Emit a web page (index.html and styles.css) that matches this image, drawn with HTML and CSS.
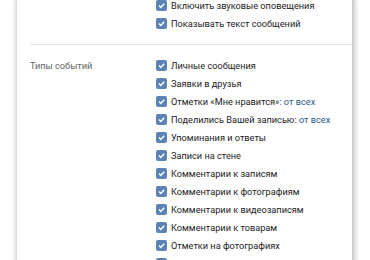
FILE: index.html
```html
<!DOCTYPE html>
<html lang="ru">
<head>
    <meta charset="UTF-8">
    <title>Настройки оповещений</title>
    <link rel="stylesheet" href="styles.css">
</head>
<body>
    <div class="page">
        <div class="card">
            <div class="section">
                <div class="section-label"></div>
                <div class="options">
                    <label class="option"><svg class="check" viewBox="0 0 11 11"><path d="M3 5.6l1.8 1.8 3.4-3.7"/></svg>Включить звуковые оповещения</label>
                    <label class="option"><svg class="check" viewBox="0 0 11 11"><path d="M3 5.6l1.8 1.8 3.4-3.7"/></svg>Показывать текст сообщений</label>
                </div>
            </div>

            <div class="divider"></div>

            <div class="section">
                <div class="section-label">Типы событий</div>
                <div class="options">
                    <label class="option"><svg class="check" viewBox="0 0 11 11"><path d="M3 5.6l1.8 1.8 3.4-3.7"/></svg>Личные сообщения</label>
                    <label class="option"><svg class="check" viewBox="0 0 11 11"><path d="M3 5.6l1.8 1.8 3.4-3.7"/></svg>Заявки в друзья</label>
                    <label class="option"><svg class="check" viewBox="0 0 11 11"><path d="M3 5.6l1.8 1.8 3.4-3.7"/></svg>Отметки «Мне нравится»: <a class="link">от всех</a></label>
                    <label class="option"><svg class="check" viewBox="0 0 11 11"><path d="M3 5.6l1.8 1.8 3.4-3.7"/></svg>Поделились Вашей записью: <a class="link">от всех</a></label>
                    <label class="option"><svg class="check" viewBox="0 0 11 11"><path d="M3 5.6l1.8 1.8 3.4-3.7"/></svg>Упоминания и ответы</label>
                    <label class="option"><svg class="check" viewBox="0 0 11 11"><path d="M3 5.6l1.8 1.8 3.4-3.7"/></svg>Записи на стене</label>
                    <label class="option"><svg class="check" viewBox="0 0 11 11"><path d="M3 5.6l1.8 1.8 3.4-3.7"/></svg>Комментарии к записям</label>
                    <label class="option"><svg class="check" viewBox="0 0 11 11"><path d="M3 5.6l1.8 1.8 3.4-3.7"/></svg>Комментарии к фотографиям</label>
                    <label class="option"><svg class="check" viewBox="0 0 11 11"><path d="M3 5.6l1.8 1.8 3.4-3.7"/></svg>Комментарии к видеозаписям</label>
                    <label class="option"><svg class="check" viewBox="0 0 11 11"><path d="M3 5.6l1.8 1.8 3.4-3.7"/></svg>Комментарии к товарам</label>
                    <label class="option"><svg class="check" viewBox="0 0 11 11"><path d="M3 5.6l1.8 1.8 3.4-3.7"/></svg>Отметки на фотографиях</label>
                    <label class="option"><svg class="check" viewBox="0 0 11 11"><path d="M3 5.6l1.8 1.8 3.4-3.7"/></svg>Подарки</label>
                </div>
            </div>
        </div>
    </div>
</body>
</html>
```

FILE: styles.css
```css
/* Global Styles */
* {
    box-sizing: border-box;
    margin: 0;
    padding: 0;
}

body {
    font-family: Roboto, 'Liberation Sans', Arial, sans-serif;
    font-size: 9.2px;
    color: #222;
    background: #fff;
    overflow: hidden;
}

.page {
    padding: 0 18px 0 17px;
}

/* Card */
.card {
    background: #fff;
    box-shadow: 1px 0 6px 1px rgba(0, 0, 0, 0.3);
    padding: 0 0 0 13px;
    margin-top: -3px;
}

.section {
    display: flex;
}

.section-label {
    width: 126px;
    flex-shrink: 0;
    color: #656565;
    line-height: 18px;
}

.options {
    display: flex;
    flex-direction: column;
}

.option {
    display: block;
    white-space: nowrap;
    height: 18px;
    line-height: 18px;
}

/* Checkbox */
.check {
    display: inline-block;
    vertical-align: -2px;
    width: 11px;
    height: 11px;
    border-radius: 2px;
    margin-right: 4px;
    background: #5d83b4;
}

.check path {
    fill: none;
    stroke: #fff;
    stroke-width: 1.4;
}

.link {
    color: #2a5885;
}

.divider {
    height: 1px;
    background: #e7e8ec;
    margin: 11px 0 12px;
}
```
